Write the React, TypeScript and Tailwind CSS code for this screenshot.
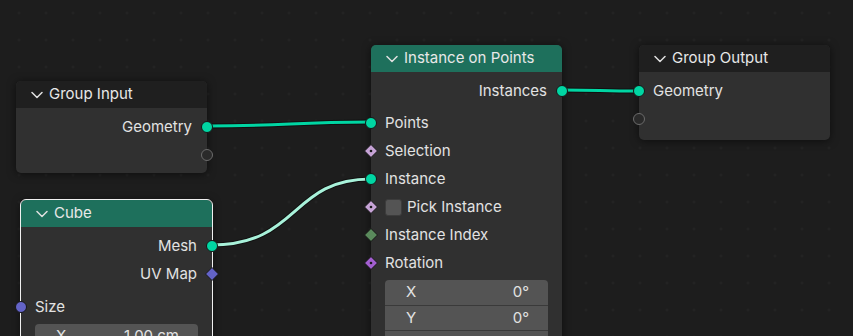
import React from 'react';

type SocketKind = 'geo' | 'empty' | 'vec' | 'field' | 'int' | 'rot' | 'uv';

const Socket: React.FC<{ kind: SocketKind; side: 'left' | 'right' }> = ({ kind, side }) => {
  const pos = side === 'left' ? '-left-[7px]' : '-right-[7px]';
  const base = `absolute top-1/2 -translate-y-1/2 ${pos} w-[14px] h-[14px] flex items-center justify-center`;

  if (kind === 'geo') {
    return (
      <span className={base}>
        <span className="w-[12px] h-[12px] rounded-full bg-[#00d6a3] border border-[#161616]" />
      </span>
    );
  }
  if (kind === 'empty') {
    return (
      <span className={base}>
        <span className="w-[12px] h-[12px] rounded-full bg-[#2a2a2a] border-[1.5px] border-[#6b6b6b]" />
      </span>
    );
  }
  if (kind === 'vec') {
    return (
      <span className={base}>
        <span className="w-[12px] h-[12px] rounded-full bg-[#6363c7] border border-[#161616]" />
      </span>
    );
  }

  const fill =
    kind === 'field' ? '#c6a3d6' : kind === 'int' ? '#5a8a5c' : kind === 'rot' ? '#a35fd1' : '#6363c7';
  const dot = kind === 'field' || kind === 'rot';

  return (
    <span className={base}>
      <svg width="14" height="14" viewBox="0 0 14 14">
        <path d="M7 0.5 L13.5 7 L7 13.5 L0.5 7 Z" fill={fill} stroke="#161616" strokeWidth="1" />
        {dot && <circle cx="7" cy="7" r="1.3" fill="#1a1a1a" />}
      </svg>
    </span>
  );
};

const Row: React.FC<{
  label?: string;
  side?: 'left' | 'right';
  kind?: SocketKind;
  children?: React.ReactNode;
}> = ({ label, side = 'left', kind, children }) => (
  <div
    className={`relative h-[28px] flex items-center ${
      side === 'right' ? 'justify-end pr-[15px]' : 'pl-[14px]'
    }`}
  >
    {children}
    {label && <span>{label}</span>}
    {kind && <Socket kind={kind} side={side} />}
  </div>
);

const Chevron = () => (
  <svg width="12" height="8" viewBox="0 0 12 8" className="shrink-0">
    <path d="M1 1.5 L6 6.5 L11 1.5" fill="none" stroke="#e0e0e0" strokeWidth="1.5" strokeLinecap="round" strokeLinejoin="round" />
  </svg>
);

const Node: React.FC<{
  x: number;
  y: number;
  title: string;
  teal?: boolean;
  selected?: boolean;
  children: React.ReactNode;
}> = ({ x, y, title, teal, selected, children }) => (
  <div
    className={`absolute w-[191px] rounded-[5px] bg-[#303030] shadow-[0_1px_8px_rgba(0,0,0,0.55)] ${
      selected ? 'outline outline-1 outline-[#f0f0f0]' : ''
    }`}
    style={{ left: x, top: y }}
  >
    <div
      className={`h-[27px] flex items-center gap-[6px] pl-[15px] rounded-t-[5px] text-[#e8e8e8] ${
        teal ? 'bg-[#1e705c]' : 'bg-[#1f1f1f]'
      }`}
    >
      <Chevron />
      <span>{title}</span>
    </div>
    {children}
  </div>
);

const VectorField: React.FC<{ rows: [string, string][] }> = ({ rows }) => (
  <div className="mx-[14px] rounded-[4px] bg-[#545454] overflow-hidden">
    {rows.map(([axis, value], i) => (
      <div
        key={axis}
        className={`h-[25px] flex items-center justify-between pl-[21px] pr-[19px] ${
          i > 0 ? 'border-t border-[#3a3a3a]' : ''
        }`}
      >
        <span>{axis}</span>
        <span>{value}</span>
      </div>
    ))}
  </div>
);

export default function App() {
  return (
    <div
      className="relative w-[853px] h-[336px] overflow-hidden bg-[#1d1d1d] bg-[radial-gradient(circle,#252525_1px,transparent_1.5px)] bg-[size:27px_27px] bg-[position:5.5px_-0.5px] text-[15px] text-[#e2e2e2]"
      style={{ fontFamily: 'Inter, "Noto Sans", sans-serif' }}
    >
      {/* Wires */}
      <svg className="absolute inset-0" width="853" height="336">
        <path d="M207 126 C 290 126, 290 122, 371 122" fill="none" stroke="#101010" strokeWidth="5" />
        <path d="M207 126 C 290 126, 290 122, 371 122" fill="none" stroke="#00d6a3" strokeWidth="3" />
        <path d="M562 90 C 600 90, 600 91, 639 91" fill="none" stroke="#101010" strokeWidth="5" />
        <path d="M562 90 C 600 90, 600 91, 639 91" fill="none" stroke="#00d6a3" strokeWidth="3" />
        <path d="M211 245 C 300 245, 290 179, 371 179" fill="none" stroke="#101010" strokeWidth="5" />
        <path d="M211 245 C 300 245, 290 179, 371 179" fill="none" stroke="#a8f2da" strokeWidth="3" />
      </svg>

      {/* Group Input */}
      <Node x={16} y={81} title="Group Input">
        <div className="pt-[5px] pb-[4px]">
          <Row label="Geometry" side="right" kind="geo" />
          <Row side="right" kind="empty" />
        </div>
      </Node>

      {/* Cube */}
      <Node x={21} y={200} title="Cube" teal selected>
        <div className="pt-[5px] pb-[20px]">
          <Row label="Mesh" side="right" kind="geo" />
          <Row label="UV Map" side="right" kind="uv" />
          <div className="mt-[5px]">
            <Row label="Size" kind="vec" />
          </div>
          <div className="mt-[3px]">
            <VectorField rows={[['X', '1.00 cm'], ['Y', '1.00 cm'], ['Z', '1.00 cm']]} />
          </div>
        </div>
      </Node>

      {/* Instance on Points */}
      <Node x={371} y={45} title="Instance on Points" teal>
        <div className="pt-[5px] pb-[20px]">
          <Row label="Instances" side="right" kind="geo" />
          <div className="mt-[4px]">
            <Row label="Points" kind="geo" />
            <Row label="Selection" kind="field" />
            <Row label="Instance" kind="geo" />
            <Row kind="field">
              <span className="w-[17px] h-[17px] mr-[5px] rounded-[3px] bg-[#545454] border border-[#3c3c3c]" />
              <span>Pick Instance</span>
            </Row>
            <Row label="Instance Index" kind="int" />
            <Row label="Rotation" kind="rot" />
          </div>
          <div className="mt-[3px]">
            <VectorField rows={[['X', '0°'], ['Y', '0°'], ['Z', '0°']]} />
          </div>
        </div>
      </Node>

      {/* Group Output */}
      <Node x={639} y={45} title="Group Output">
        <div className="pt-[5px] pb-[7px]">
          <Row label="Geometry" kind="geo" />
          <Row kind="empty" />
        </div>
      </Node>
    </div>
  );
}
